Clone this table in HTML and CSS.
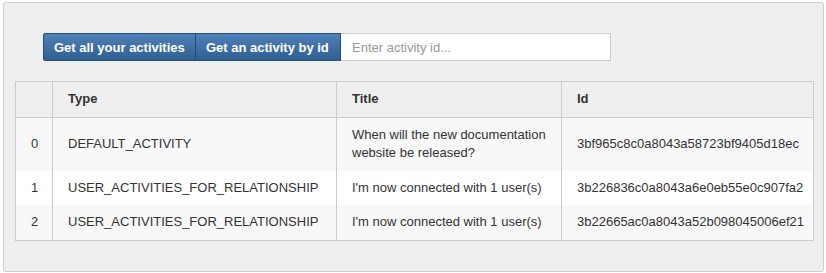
FILE: index.html
```html
<!DOCTYPE html>
<html lang="en">
<head>
    <meta charset="UTF-8">
    <title>Activities</title>
    <link rel="stylesheet" href="styles.css">
</head>
<body>
    <div class="well">
        <div class="toolbar">
            <button type="button" class="btn btn-all">Get all your activities</button>
            <button type="button" class="btn btn-one">Get an activity by id</button>
            <input type="text" class="activity-id" placeholder="Enter activity id...">
        </div>
        <table class="activities">
            <thead>
                <tr>
                    <th class="col-index"></th>
                    <th class="col-type">Type</th>
                    <th class="col-title">Title</th>
                    <th class="col-id">Id</th>
                </tr>
            </thead>
            <tbody>
                <tr>
                    <td class="col-index">0</td>
                    <td>DEFAULT_ACTIVITY</td>
                    <td>When will the new documentation website be released?</td>
                    <td>3bf965c8c0a8043a58723bf9405d18ec</td>
                </tr>
                <tr>
                    <td class="col-index">1</td>
                    <td>USER_ACTIVITIES_FOR_RELATIONSHIP</td>
                    <td>I'm now connected with 1 user(s)</td>
                    <td>3b226836c0a8043a6e0eb55e0c907fa2</td>
                </tr>
                <tr>
                    <td class="col-index">2</td>
                    <td>USER_ACTIVITIES_FOR_RELATIONSHIP</td>
                    <td>I'm now connected with 1 user(s)</td>
                    <td>3b22665ac0a8043a52b098045006ef21</td>
                </tr>
            </tbody>
        </table>
    </div>
</body>
</html>
```

FILE: styles.css
```css
body { margin: 0; background-color: #fff; font-family: "Liberation Sans", Arial, sans-serif; font-size: 13px; color: #333; }
.well {
    margin: 2px 2px 0 3px;
    height: 238px;
    padding: 30px 9px 0 11px;
    background-color: #efefef;
    border: 1px solid #cfcfcf;
    border-radius: 3px;
    box-shadow: 0 1px 1px rgba(0,0,0,0.06);
}
.toolbar { display: flex; height: 28px; margin-left: 28px; margin-bottom: 20px; }
.btn {
    height: 28px;
    padding: 0 4px 0 10px;
    text-align: left;
    white-space: nowrap;
    overflow: hidden;
    font-family: inherit;
    font-size: 13px;
    font-weight: bold;
    color: #fff;
    background: linear-gradient(to bottom, #4f80b7 0%, #2f5f92 100%);
    border: 1px solid #24507e;
    border-radius: 0;
    cursor: pointer;
}
.btn-all { width: 153px; border-radius: 2px 0 0 2px; }
.btn-one { width: 146px; margin-left: -1px; border-left-color: #214a74; }
.activity-id {
    width: 270px;
    height: 28px;
    box-sizing: border-box;
    padding: 0 11px;
    font-family: inherit;
    font-size: 13px;
    color: #333;
    background-color: #fff;
    border: 1px solid #ccc;
    border-left: none;
    outline: none;
}
.activity-id::placeholder { color: #999; }
.activities { border-collapse: collapse; width: 799px; border: 1px solid #ccc; table-layout: fixed; }
.activities th,
.activities td {
    padding: 8px 15px;
    line-height: 18.5px;
    text-align: left;
    vertical-align: middle;
    border: 1px solid #ccc;
}
.activities th { font-weight: bold; color: #333; background-color: #efefef; }
.activities tbody tr { background-color: #f8f8f8; }
.activities tbody tr:nth-child(2) { background-color: #fff; }
.activities td { border-top: none; border-bottom: none; }
.activities .col-index { width: 6px; text-align: center; }
.activities .col-type { width: 253px; }
.activities .col-title { width: 194px; }
```
